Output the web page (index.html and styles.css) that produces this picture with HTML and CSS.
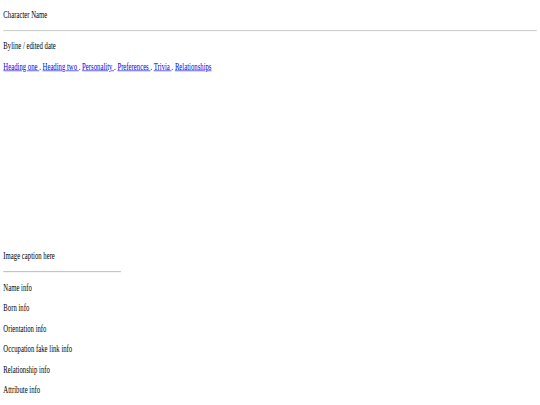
FILE: index.html
```html
<!DOCTYPE html>
<html lang="en">
<head>
<meta charset="utf-8">
<title>Character Name</title>
<link rel="stylesheet" href="styles.css">
</head>
<body>
<div class="frame">
<div class="page">
  <p class="title">Character Name</p>
  <hr class="rule">
  <p class="byline">Byline / edited date</p>
  <p class="toc"><a href="#h1">Heading one </a>. <a href="#h2">Heading two </a>. <a href="#p">Personality </a>. <a href="#pr">Preferences </a>. <a href="#t">Trivia </a>. <a href="#r">Relationships</a></p>
  <div class="infobox">
    <div class="image"></div>
    <p class="caption">Image caption here</p>
    <hr class="rule">
    <p>Name info</p>
    <p>Born info</p>
    <p>Orientation info</p>
    <p>Occupation fake link info</p>
    <p>Relationship info</p>
    <p>Attribute info</p>
  </div>
</div>
</div>
</body>
</html>
```
FILE: styles.css
```css
html, body {
  margin: 0;
  padding: 0;
  background: #ffffff;
  overflow: hidden;
}
.frame {
  width: 540px;
  height: 405px;
  overflow: hidden;
}
.page {
  width: 1286px;
  padding: 16px 8px 0;
  box-sizing: border-box;
  font-family: "Liberation Serif", "Times New Roman", serif;
  font-size: 16px;
  line-height: normal;
  color: #000;
  transform: scale(0.42, 0.603);
  transform-origin: 0 0;
}
p {
  margin: 16px 0;
}
.title {
  margin-top: 0;
}
.rule {
  margin: 8px 0;
  border: 0;
  border-top: 1px solid #9a9a9a;
  border-bottom: 1px solid #eeeeee;
  height: 0;
}
.toc a {
  color: #0000ee;
}
.infobox {
  width: 280px;
}
.image {
  height: 264px;
}
```
